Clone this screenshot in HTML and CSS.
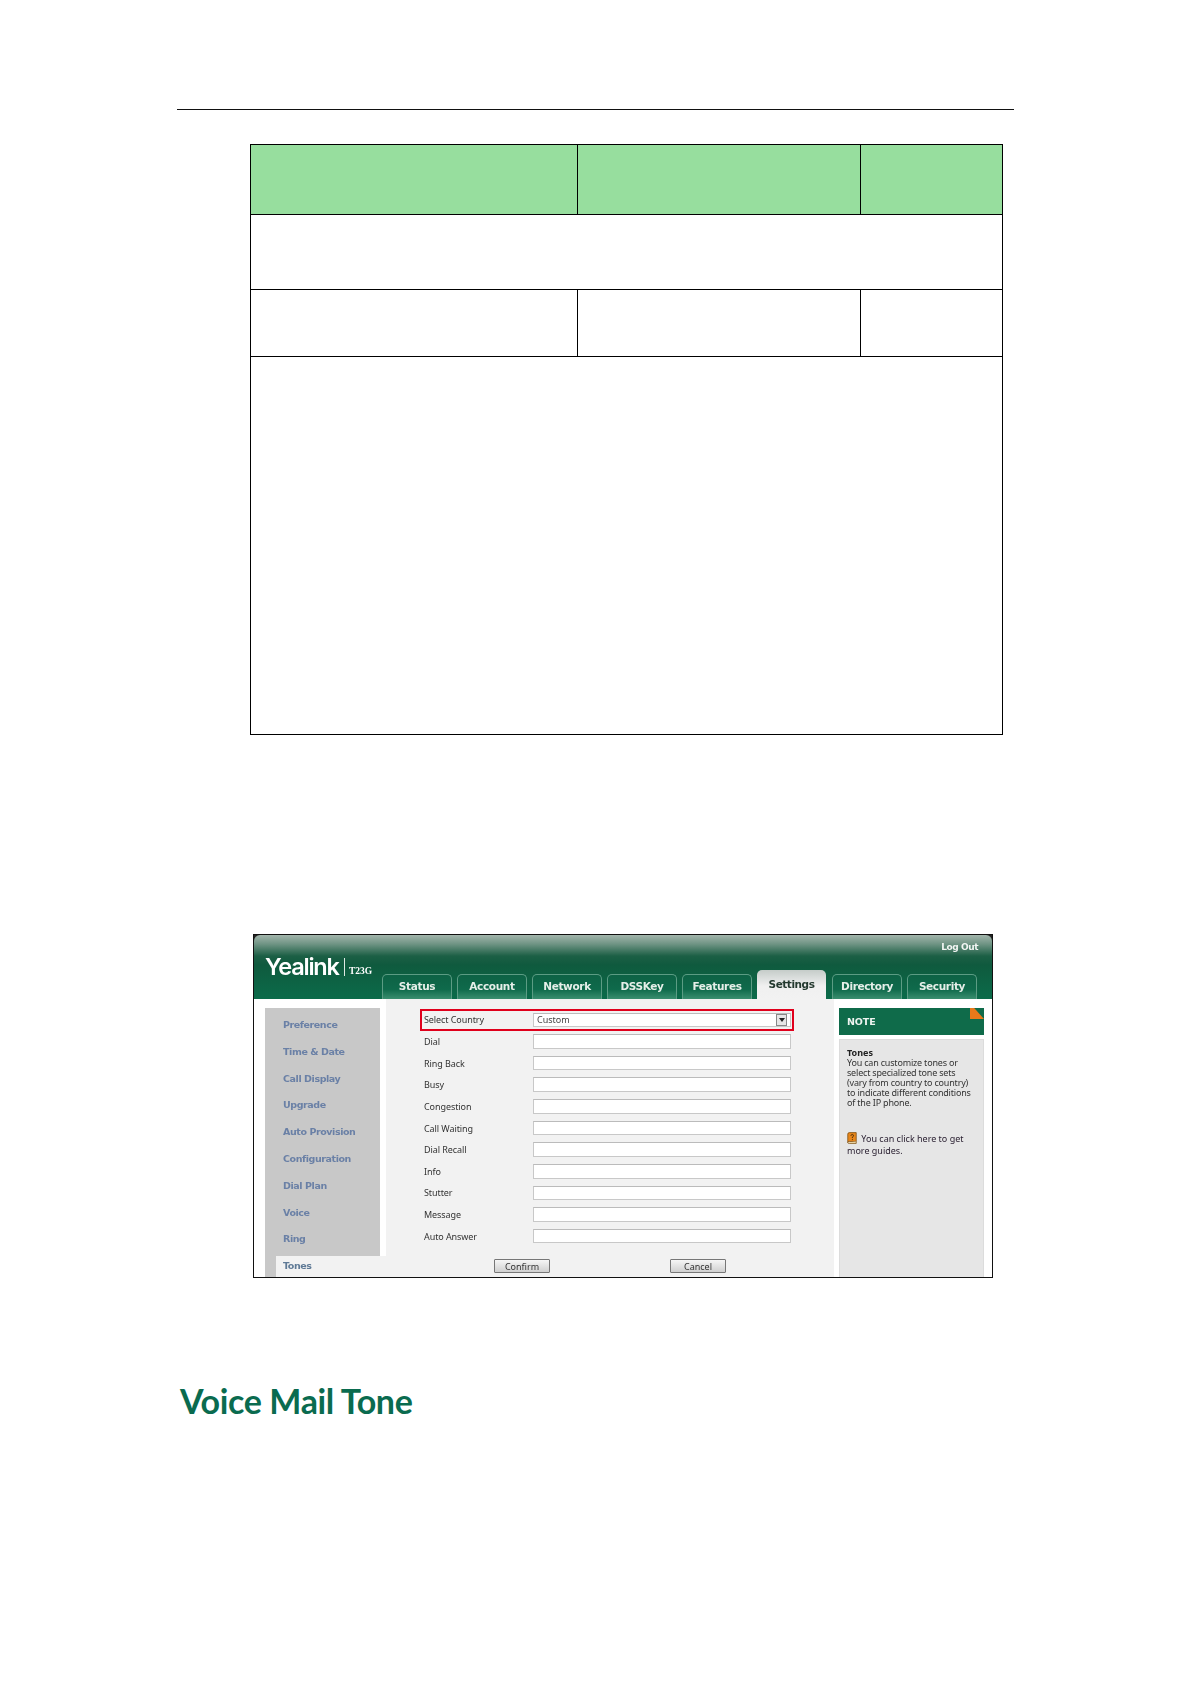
FILE: index.html
```html
<!DOCTYPE html>
<html lang="en">
<head>
<meta charset="utf-8">
<title>Voice Mail Tone</title>
<link rel="stylesheet" href="styles.css">
</head>
<body>
<div class="page">
  <div class="rule"></div>
  <table class="spec">
    <colgroup><col class="c1"><col class="c2"><col class="c3"></colgroup>
    <tr class="r-head"><th></th><th></th><th></th></tr>
    <tr class="r-desc"><td colspan="3"></td></tr>
    <tr class="r-row"><td></td><td></td><td></td></tr>
    <tr class="r-long"><td colspan="3"></td></tr>
  </table>

  <div class="shot">
    <div class="shot-head">
      <div class="logo">
        <span class="logo-word">Yealink</span>
        <span class="logo-sep"></span>
        <span class="logo-model">T23G</span>
      </div>
      <div class="head-right">
        <div class="logout">Log Out</div>
        <div class="tabs">
          <div class="tab">Status</div>
          <div class="tab">Account</div>
          <div class="tab">Network</div>
          <div class="tab">DSSKey</div>
          <div class="tab">Features</div>
          <div class="tab active">Settings</div>
          <div class="tab">Directory</div>
          <div class="tab">Security</div>
        </div>
      </div>
    </div>
    <div class="shot-body">
      <div class="side">
        <div class="side-item">Preference</div>
        <div class="side-item">Time &amp; Date</div>
        <div class="side-item">Call Display</div>
        <div class="side-item">Upgrade</div>
        <div class="side-item">Auto Provision</div>
        <div class="side-item">Configuration</div>
        <div class="side-item">Dial Plan</div>
        <div class="side-item">Voice</div>
        <div class="side-item">Ring</div>
        <div class="side-item selected">Tones</div>
      </div>
      <div class="content">
        <div class="form-row highlighted">
          <span class="label">Select Country</span>
          <div class="field select"><span>Custom</span><span class="arrow"></span></div>
        </div>
        <div class="form-row"><span class="label">Dial</span><div class="field"></div></div>
        <div class="form-row"><span class="label">Ring Back</span><div class="field"></div></div>
        <div class="form-row"><span class="label">Busy</span><div class="field"></div></div>
        <div class="form-row"><span class="label">Congestion</span><div class="field"></div></div>
        <div class="form-row"><span class="label">Call Waiting</span><div class="field"></div></div>
        <div class="form-row"><span class="label">Dial Recall</span><div class="field"></div></div>
        <div class="form-row"><span class="label">Info</span><div class="field"></div></div>
        <div class="form-row"><span class="label">Stutter</span><div class="field"></div></div>
        <div class="form-row"><span class="label">Message</span><div class="field"></div></div>
        <div class="form-row"><span class="label">Auto Answer</span><div class="field"></div></div>
        <div class="buttons">
          <div class="btn">Confirm</div>
          <div class="btn">Cancel</div>
        </div>
      </div>
      <div class="note">
        <div class="note-head">NOTE<span class="note-corner"></span></div>
        <div class="note-panel">
          <div class="note-title">Tones</div>
          <p class="note-text">You can customize tones or<br>select specialized tone sets<br>(vary from country to country)<br>to indicate different conditions<br>of the IP phone.</p>
          <p class="note-guide"><svg class="book" viewBox="0 0 13 15" width="10" height="12"><path d="M1 2.5 Q1 .5 3 .5 H12 V12 H3 Q1 12 1 13.5 Z" fill="#e8861a" stroke="#7a4a0c" stroke-width="1"/><path d="M1 13.5 Q1 14.5 3 14.5 H12 V12" fill="#f4e0b0" stroke="#7a4a0c" stroke-width="1"/><path d="M5 4.6 Q5.2 3 6.8 3 Q8.5 3 8.5 4.6 Q8.5 5.6 7 6.3 V7.6 M7 9 V10.2" fill="none" stroke="#3a2405" stroke-width="1.1"/></svg> You can click here to get<br>more guides.</p>
        </div>
      </div>
    </div>
  </div>

  <h2 class="section">Voice Mail Tone</h2>
</div>
</body>
</html>
```

FILE: styles.css
```css
* { box-sizing: border-box; }
html, body { margin: 0; padding: 0; background: #fff; }
.page { width: 1191px; height: 1684px; overflow: hidden; padding-top: 109px; }

.rule { width: 837px; height: 1px; margin-left: 177px; background: #111; }

.spec { border-collapse: collapse; table-layout: fixed; width: 752px; margin: 34px 0 0 250px; }
.spec th, .spec td { border: 1px solid #000; padding: 0; }
.spec th { background: #97de9e; }
.c1 { width: 327px; }
.c2 { width: 283px; }
.c3 { width: 142px; }
.r-head { height: 70px; }
.r-desc { height: 75px; }
.r-row { height: 67px; }
.r-long { height: 378px; }

.shot {
  width: 740px; height: 344px; margin: 199px 0 0 253px;
  border: 1px solid #111; background: #222;
  font-family: "Noto Sans", sans-serif;
  overflow: hidden; filter: blur(.3px);
}
.shot-head {
  height: 64px; display: flex; border-radius: 6px 6px 0 0;
  background: linear-gradient(#a3b5ac 0, #6f9484 9px, #1c5f45 21px, #0f5a3e 30px, #0b6b4a 64px);
}
.logo { width: 128px; padding: 0 0 22px 11px; display: flex; align-items: flex-end; color: #fff; }
.logo-word { font: 600 23.5px/20px "Inter", sans-serif; letter-spacing: -1.2px; width: 79px; }
.logo-sep { width: 1px; height: 18px; background: #dfe9e4; margin-bottom: 1px; }
.logo-model { font: 700 9.5px/10px "Liberation Serif", serif; margin: 0 0 1px 4px; }

.head-right { flex: 1; display: flex; flex-direction: column; justify-content: space-between; }
.logout { font: 700 9px/12px "DejaVu Sans", sans-serif; color: #f2f5f3; align-self: flex-end; margin: 6px 14px 0 0; letter-spacing: -.45px; }
.tabs { display: flex; align-items: flex-end; gap: 5px; }
.tab {
  width: 70px; height: 25px; border: 1px solid #5c9c84; border-bottom: 0; border-radius: 5px 5px 0 0;
  background: linear-gradient(#0d6245, #0f6a4b 60%, #3a8e6f);
  color: #e6efe9; font: 700 10.5px/22px "DejaVu Sans", sans-serif; letter-spacing: -.35px; text-align: center;
}
.tab.active {
  height: 29px; width: 69px; margin-right: 1px; border: 0; color: #23392f; line-height: 29px; letter-spacing: -.45px;
  background: linear-gradient(#c5ccc9, #f0f0f0 55%, #f2f2f2);
}

.shot-body { height: 278px; display: flex; background: #fff; padding-left: 11px; }

.side { width: 115px; margin-top: 9px; background: #c8c8c8; padding-top: 4px; }
.side-item {
  height: 26.8px; padding-left: 18px;
  font: 700 9.5px/26.8px "DejaVu Sans", sans-serif; letter-spacing: -.42px; color: #6a80a6;
}
.side-item.selected {
  height: 22px; width: 110px; margin: 3px 0 0 11px; padding-left: 7px;
  line-height: 20px; background: #f2f2f2; color: #5f7a96;
}

.content { width: 448px; margin-left: 6px; background: #f2f2f2; padding: 10px 0 0 34px; }
.form-row { width: 374px; height: 21.65px; display: flex; align-items: center; padding-left: 4px; }
.form-row.highlighted { box-shadow: inset 0 0 0 2px #e0001c; }
.label { width: 109px; font-size: 9px; letter-spacing: -.08px; color: #333; }
.field { width: 258px; height: 14.5px; background: #fff; border: 1px solid #c8c8c8; border-top-color: #bbb; }
.field.select { display: flex; align-items: center; justify-content: space-between; padding: 0 3px 0 3px; font-size: 9px; color: #444; }
.arrow {
  width: 11px; height: 12px; background: #e6e6e6; border: 1px solid #888;
  display: flex; align-items: center; justify-content: center;
}
.arrow::after { content: ""; border: 3px solid transparent; border-top: 4px solid #222; border-bottom: 0; }
.buttons { display: flex; gap: 120px; padding-left: 74px; margin-top: 12px; }
.btn {
  width: 56px; height: 14px; border: 1px solid #777; border-radius: 1px;
  background: linear-gradient(#f6f6f6, #d0d0d0);
  font-size: 9px; line-height: 13px; text-align: center; color: #333;
}

.note { width: 145px; margin-left: 5px; display: flex; flex-direction: column; }
.note-head {
  height: 27px; margin-top: 9px; padding-left: 8px; position: relative;
  background: #0f6b4a; color: #eef4f0; font: 700 9.5px/27px "DejaVu Sans", sans-serif; letter-spacing: -.1px;
}
.note-corner {
  position: absolute; top: 0; right: 0; width: 14px; height: 11px; background: #e8791a;
  clip-path: polygon(0 0, 30% 0, 100% 100%, 0 100%);
}
.note-panel {
  flex: 1; margin-top: 4px; padding: 8px 0 0 7px; background: #e6e6e6;
  border: 1px solid #dcdcdc; border-bottom: 0; font-size: 9px; line-height: 10px; color: #333;
}
.note-title { font-weight: 700; color: #222; }
.note-text { margin: 0; letter-spacing: -.19px; }
.note-guide { margin: 24px 0 0; line-height: 12px; color: #2c2233; }
.book { vertical-align: -2px; margin-right: 2px; }

.section {
  margin: 102.5px 0 0 180px; font: 700 34px/40px "Lato", sans-serif; color: #0a6b4f; letter-spacing: -.37px;
}
```
